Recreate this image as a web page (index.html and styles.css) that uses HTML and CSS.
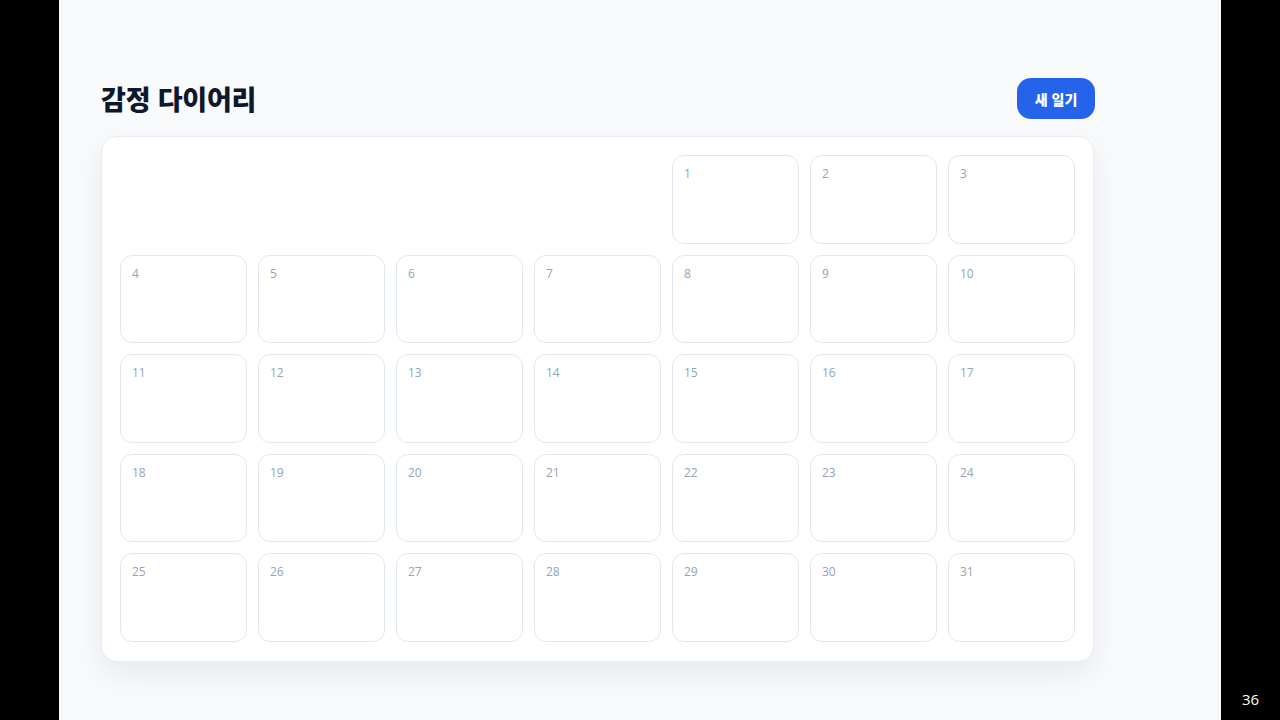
FILE: index.html
```html
<!DOCTYPE html>
<html lang="ko">
<head>
<meta charset="utf-8">
<link rel="stylesheet" href="styles.css">
</head>
<body>
<div class="stage">
  <main class="panel">
    <header class="header">
      <h1 class="title">감정 다이어리</h1>
      <button class="new-btn">새 일기</button>
    </header>
    <section class="card">
      <div class="grid">
        <div class="blank"></div><div class="blank"></div><div class="blank"></div><div class="blank"></div>
        <div class="day"><span class="num">1</span></div>
        <div class="day"><span class="num">2</span></div>
        <div class="day"><span class="num">3</span></div>
        <div class="day"><span class="num">4</span></div>
        <div class="day"><span class="num">5</span></div>
        <div class="day"><span class="num">6</span></div>
        <div class="day"><span class="num">7</span></div>
        <div class="day"><span class="num">8</span></div>
        <div class="day"><span class="num">9</span></div>
        <div class="day"><span class="num">10</span></div>
        <div class="day"><span class="num">11</span></div>
        <div class="day"><span class="num">12</span></div>
        <div class="day"><span class="num">13</span></div>
        <div class="day"><span class="num">14</span></div>
        <div class="day"><span class="num">15</span></div>
        <div class="day"><span class="num">16</span></div>
        <div class="day"><span class="num">17</span></div>
        <div class="day"><span class="num">18</span></div>
        <div class="day"><span class="num">19</span></div>
        <div class="day"><span class="num">20</span></div>
        <div class="day"><span class="num">21</span></div>
        <div class="day"><span class="num">22</span></div>
        <div class="day"><span class="num">23</span></div>
        <div class="day"><span class="num">24</span></div>
        <div class="day"><span class="num">25</span></div>
        <div class="day"><span class="num">26</span></div>
        <div class="day"><span class="num">27</span></div>
        <div class="day"><span class="num">28</span></div>
        <div class="day"><span class="num">29</span></div>
        <div class="day"><span class="num">30</span></div>
        <div class="day"><span class="num">31</span></div>
      </div>
    </section>
  </main>
  <div class="page-no">36</div>
</div>
</body>
</html>
```
FILE: styles.css
```css
* { box-sizing: border-box; }
html, body {
  margin: 0;
  padding: 0;
  background: #000;
  width: 1280px;
  height: 720px;
  overflow: hidden;
}
.stage {
  display: flex;
  width: 1280px;
  height: 720px;
  font-family: "Noto Sans", "Noto Sans CJK KR", sans-serif;
}
.panel {
  margin-left: 59px;
  width: 1162px;
  height: 720px;
  background: #f8fafc;
  padding: 78px 0 0 42px;
}
.header {
  width: 994px;
  height: 41px;
  display: flex;
  align-items: center;
  justify-content: space-between;
}
.title {
  margin: 0;
  font-family: "Noto Sans CJK KR", sans-serif;
  font-size: 27px;
  font-weight: 800;
  color: #0f172a;
  letter-spacing: -0.2px;
  line-height: 1;
}
.new-btn {
  height: 41px;
  width: 78px;
  border: none;
  border-radius: 14px;
  background: #2563eb;
  color: #fff;
  font-family: "Noto Sans CJK KR", sans-serif;
  font-size: 14px;
  font-weight: 800;
  padding: 0;
}
.card {
  margin-top: 17px;
  width: 993px;
  background: #fff;
  border: 1px solid #e8ecf1;
  border-radius: 16px;
  box-shadow: 0 12px 30px rgba(15, 23, 42, 0.07);
  padding: 18px 18px 19px 18px;
}
.grid {
  display: grid;
  grid-template-columns: repeat(7, 127px);
  grid-auto-rows: 88.5px;
  column-gap: 11px;
  row-gap: 11px;
}
.day {
  border: 1px solid #e2e8f0;
  border-radius: 12px;
  padding: 5px 11px;
  background: #fff;
}
.num {
  font-family: "Open Sans", "Noto Sans", sans-serif;
  font-size: 12px;
  color: #94a3b8;
  line-height: 16px;
}
.page-no {
  position: absolute;
  left: 1242px;
  top: 689px;
  color: #fff;
  font-family: "Open Sans", sans-serif;
  font-size: 15px;
}
```
